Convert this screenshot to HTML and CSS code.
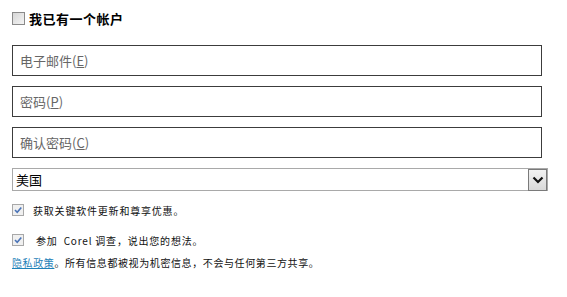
FILE: index.html
```
<!DOCTYPE html>
<html lang="zh-CN">
<head>
<meta charset="utf-8">
<title>Corel</title>
<link rel="stylesheet" href="styles.css">
</head>
<body>
<div class="form">
  <div class="have-account">
    <span class="box-empty"></span>
    <span class="have-label">我已有一个帐户</span>
  </div>
  <div class="fields">
    <div class="field">电子邮件(<u>E</u>)</div>
    <div class="field">密码(<u>P</u>)</div>
    <div class="field">确认密码(<u>C</u>)</div>
  </div>
  <div class="select">
    <span class="select-text">美国</span>
    <span class="select-btn">
      <svg width="12" height="8" viewBox="0 0 12 8"><path d="M1.5 1.5 L6 6 L10.5 1.5" fill="none" stroke="#111" stroke-width="2.2"/></svg>
    </span>
  </div>
  <div class="opt opt-1">
    <span class="box-checked"><svg width="10" height="10" viewBox="0 0 10 10"><path d="M2 5 L4.2 7.2 L8.3 2.4" fill="none" stroke="#4a74b8" stroke-width="1.6"/></svg></span>
    <span class="opt-text">获取关键软件更新和尊享优惠。</span>
  </div>
  <div class="opt opt-2">
    <span class="box-checked"><svg width="10" height="10" viewBox="0 0 10 10"><path d="M2 5 L4.2 7.2 L8.3 2.4" fill="none" stroke="#4a74b8" stroke-width="1.6"/></svg></span>
    <span class="opt-text opt-text-2">参加 &nbsp;Corel 调查，说出您的想法。</span>
  </div>
  <div class="privacy"><a href="#">隐私政策</a>。所有信息都被视为机密信息，不会与任何第三方共享。</div>
</div>
</body>
</html>
```
FILE: styles.css
```
html, body {
  margin: 0;
  padding: 0;
  background: #ffffff;
}
body {
  font-family: "Noto Sans CJK SC", "Noto Sans", sans-serif;
  color: #000;
}
.form {
  padding: 12px 0 0 12px;
  width: 536px;
}
.have-account {
  display: flex;
  align-items: center;
  gap: 4px;
  height: 13px;
}
.box-empty {
  width: 11px;
  height: 11px;
  border: 1px solid #8a8a8a;
  background: linear-gradient(135deg, #d6d6d6, #f4f4f4);
  flex: none;
}
.have-label {
  font-size: 13px;
  font-weight: 700;
  line-height: 13px;
  letter-spacing: 0.5px;
}
.fields {
  display: flex;
  flex-direction: column;
  gap: 10px;
  margin-top: 20px;
}
.field {
  width: 521px;
  height: 29px;
  border: 1px solid #3c3c3c;
  box-sizing: content-box;
  line-height: 29px;
  padding-left: 7px;
  font-size: 13px;
  color: #666;
}
.field u {
  text-decoration: underline;
}
.select {
  margin-top: 10px;
  width: 534px;
  height: 21px;
  border: 1px solid #a9a9a9;
  display: flex;
  align-items: center;
}
.select-text {
  flex: 1;
  font-size: 13px;
  padding-left: 3px;
  color: #000;
}
.select-btn {
  width: 17px;
  height: 20px;
  border: 1px solid #7a7a7a;
  background: linear-gradient(#f2f2f2, #d9d9d9);
  display: flex;
  align-items: center;
  justify-content: center;
}
.opt {
  display: flex;
  align-items: center;
  height: 12px;
}
.opt-1 {
  margin-top: 13px;
}
.opt-2 {
  margin-top: 18px;
}
.box-checked {
  width: 10px;
  height: 10px;
  border: 1px solid #a8a8a8;
  background: #f0f0f0;
  flex: none;
  display: flex;
}
.opt-text {
  font-size: 10px;
  margin-left: 9px;
  letter-spacing: 0.8px;
  color: #111;
}
.opt-text-2 {
  margin-left: 12px;
}
.privacy {
  margin-top: 10px;
  font-size: 10px;
  letter-spacing: 0.6px;
  color: #111;
  line-height: 13px;
}
.privacy a {
  color: #1f82b8;
  text-decoration: underline;
}
```
